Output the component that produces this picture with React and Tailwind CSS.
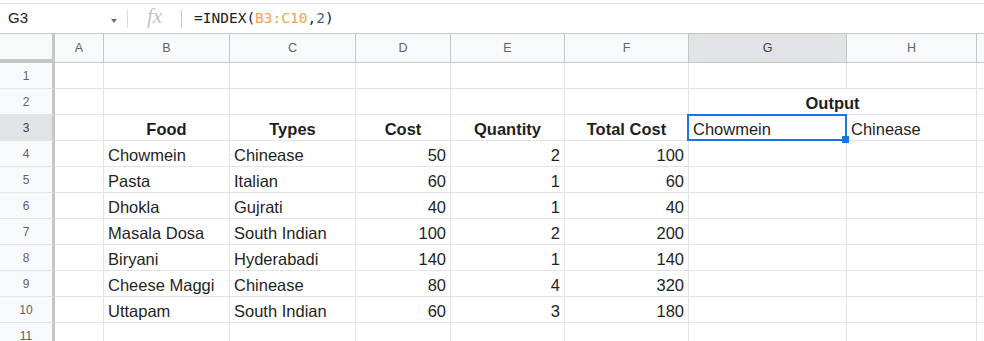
const COLS = [
  { key: 'A', w: 'w-[49px]' },
  { key: 'B', w: 'w-[126px]' },
  { key: 'C', w: 'w-[126px]' },
  { key: 'D', w: 'w-[95px]' },
  { key: 'E', w: 'w-[114px]' },
  { key: 'F', w: 'w-[124px]' },
  { key: 'G', w: 'w-[158px]' },
  { key: 'H', w: 'w-[130px]' },
];

const DATA = [
  ['Chowmein', 'Chinease', 50, 2, 100],
  ['Pasta', 'Italian', 60, 1, 60],
  ['Dhokla', 'Gujrati', 40, 1, 40],
  ['Masala Dosa', 'South Indian', 100, 2, 200],
  ['Biryani', 'Hyderabadi', 140, 1, 140],
  ['Cheese Maggi', 'Chinease', 80, 4, 320],
  ['Uttapam', 'South Indian', 60, 3, 180],
];

const cellBase = 'h-[26px] shrink-0 border-r border-b border-[#e2e3e3] flex items-end pb-[1px] text-[16.5px] leading-[19px] text-[#1f1f1f] whitespace-nowrap overflow-hidden';

function RowHead({ n, active }) {
  return (
    <div
      className={`w-[55px] h-[26px] shrink-0 border-r-[3px] border-r-[#c4c7c5] border-b border-b-[#e2e3e3] flex items-center justify-center text-[12px] leading-[14px] ${
        active ? 'bg-[#e1e3e6] text-[#3c4043]' : 'bg-[#f8f9fa] text-[#5f6368]'
      }`}
    >
      {n}
    </div>
  );
}

function Cell({ w, children, align = 'left', bold, className = '' }) {
  const a = align === 'right' ? 'justify-end pr-[4px]' : align === 'center' ? 'justify-center' : 'justify-start pl-[4px]';
  return <div className={`${cellBase} ${w} ${a} ${bold ? 'font-bold' : ''} ${className}`}>{children}</div>;
}

function Tail() {
  return <div className={`${cellBase} flex-1 border-r-0`} />;
}

function EmptyRow({ n }) {
  return (
    <div className="flex">
      <RowHead n={n} />
      {COLS.map((c) => (
        <Cell key={c.key} w={c.w} />
      ))}
      <Tail />
    </div>
  );
}

export default function App() {
  return (
    <div className="w-[984px] h-[341px] overflow-hidden bg-white" style={{ fontFamily: 'Arial, "Liberation Sans", sans-serif' }}>
      {/* formula bar */}
      <div className="h-[3px] bg-white" />
      <div className="h-[30px] flex items-center border-t border-[#e3e3e3]">
        <div className="w-[127px] h-full flex items-center relative">
          <span className="pl-[8px] text-[15px] text-[#202124]">G3</span>
          <span className="absolute left-[111px] top-[15px] w-0 h-0 border-l-[3.5px] border-r-[3.5px] border-t-[4px] border-l-transparent border-r-transparent border-t-[#6b6e72]" />
        </div>
        <div className="w-px h-[18px] bg-[#dadce0]" />
        <div className="w-[53px] flex justify-center">
          <span className="italic text-[21px] text-[#c4c4c4] -mt-[3px]" style={{ fontFamily: '"Liberation Serif", serif' }}>fx</span>
        </div>
        <div className="w-px h-[18px] bg-[#c8c8c8]" />
        <div className="pl-[12px] text-[14.5px] text-[#202124]" style={{ fontFamily: '"DejaVu Sans Mono", "Liberation Mono", monospace' }}>
          =INDEX(<span className="text-[#f0a35a]">B3:C10</span>,<span className="text-[#4a5f8f]">2</span>)
        </div>
      </div>

      {/* column headers */}
      <div className="flex h-[30px] border-t border-[#c4c7c5]">
        <div className="w-[55px] shrink-0 bg-[#f8f9fa] border-r-[3px] border-r-[#c4c7c5] border-b-[4px] border-b-[#c4c7c5]" />
        {COLS.map((c) => (
          <div
            key={c.key}
            className={`${c.w} shrink-0 border-r border-b border-[#c4c7c5] flex items-center justify-center pt-[1px] text-[12.5px] ${
              c.key === 'G' ? 'bg-[#e1e3e6] text-[#3c4043]' : 'bg-[#f8f9fa] text-[#5f6368]'
            }`}
          >
            {c.key}
          </div>
        ))}
        <div className="flex-1 bg-[#f8f9fa] border-b border-[#c4c7c5]" />
      </div>

      <EmptyRow n={1} />

      {/* row 2 with merged G2:H2 */}
      <div className="flex">
        <RowHead n={2} />
        {COLS.slice(0, 6).map((c) => (
          <Cell key={c.key} w={c.w} />
        ))}
        <Cell w="w-[288px]" align="center" bold>
          Output
        </Cell>
        <Tail />
      </div>

      {/* row 3 headers */}
      <div className="flex">
        <RowHead n={3} active />
        <Cell w="w-[49px]" />
        <Cell w="w-[126px]" align="center" bold>Food</Cell>
        <Cell w="w-[126px]" align="center" bold>Types</Cell>
        <Cell w="w-[95px]" align="center" bold>Cost</Cell>
        <Cell w="w-[114px]" align="center" bold>Quantity</Cell>
        <Cell w="w-[124px]" align="center" bold>Total Cost</Cell>
        <Cell w="w-[158px]" className="relative overflow-visible">
          Chowmein
          <div className="absolute -left-[2px] -top-[1px] w-[160px] h-[27px] border-2 border-[#1a73e8]" />
          <div className="absolute -right-[3px] -bottom-[3px] w-[7px] h-[7px] bg-[#1a73e8] z-10" />
        </Cell>
        <Cell w="w-[130px]">Chinease</Cell>
        <Tail />
      </div>

      {DATA.map((r, i) => (
        <div key={i} className="flex">
          <RowHead n={i + 4} />
          <Cell w="w-[49px]" />
          <Cell w="w-[126px]">{r[0]}</Cell>
          <Cell w="w-[126px]">{r[1]}</Cell>
          <Cell w="w-[95px]" align="right">{r[2]}</Cell>
          <Cell w="w-[114px]" align="right">{r[3]}</Cell>
          <Cell w="w-[124px]" align="right">{r[4]}</Cell>
          <Cell w="w-[158px]" />
          <Cell w="w-[130px]" />
          <Tail />
        </div>
      ))}

      <EmptyRow n={11} />
    </div>
  );
}
